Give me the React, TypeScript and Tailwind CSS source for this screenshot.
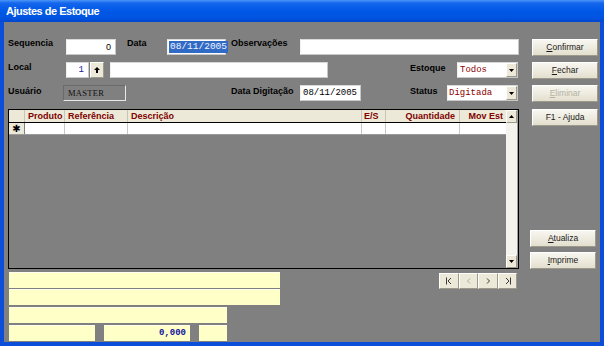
import React from "react";

const SANS = "font-['Liberation_Sans',Arial,sans-serif]";
const MONO = "font-['Liberation_Mono','Courier_New',monospace]";

function Lbl({ children, className }: { children: React.ReactNode; className: string }) {
  return (
    <span className={`shrink-0 self-start text-[9px] font-bold leading-none text-black whitespace-nowrap ${SANS} ${className}`}>
      {children}
    </span>
  );
}

function Btn({ children, className, disabled }: { children: React.ReactNode; className: string; disabled?: boolean }) {
  return (
    <div
      className={`h-[17px] w-[66px] shrink-0 flex items-center justify-center border border-t-white border-l-white border-r-[#9d9a8c] border-b-[#9d9a8c] bg-[linear-gradient(180deg,#f7f6f0_0%,#ece9dc_60%,#e2dfcf_100%)] text-[8.5px] leading-none ${SANS} ${disabled ? "text-[#b5b2a4]" : "text-[#1a1a1a]"} ${className}`}
    >
      {children}
    </div>
  );
}

function DropArrow() {
  return (
    <div className="w-[11px] h-full shrink-0 flex items-center justify-center bg-[#ece9d8] border border-t-white border-l-white border-r-[#9d9a8c] border-b-[#9d9a8c]">
      <svg width="5" height="3" viewBox="0 0 5 3">
        <path d="M0 0 L5 0 L2.5 3 Z" fill="#000" />
      </svg>
    </div>
  );
}

function NavGlyph({ kind }: { kind: "first" | "prev" | "next" | "last" }) {
  const c = kind === "prev" ? "#b0ada0" : "#3a3a3a";
  return (
    <svg width="8" height="8" viewBox="0 0 8 8" fill="none" stroke={c} strokeWidth="1">
      {kind === "first" && (
        <>
          <path d="M1.5 0.5 V7.5" />
          <path d="M6 1 L3 4 L6 7" />
        </>
      )}
      {kind === "prev" && <path d="M5 1.5 L2.5 4 L5 6.5" />}
      {kind === "next" && <path d="M3 1.5 L5.5 4 L3 6.5" />}
      {kind === "last" && (
        <>
          <path d="M2 1 L5 4 L2 7" />
          <path d="M6.5 0.5 V7.5" />
        </>
      )}
    </svg>
  );
}

const inputBox = "h-[16px] shrink-0 bg-white border border-t-[#d8d8d8] border-l-[#f0f0f0] border-r-[#c8c8c8] border-b-[#c8c8c8]";
const yellow = "h-[16px] shrink-0 bg-[#ffffc8] border-t border-t-[#fffff0]";

export default function App() {
  return (
    <div className="w-[604px] h-[346px] bg-[#0c4ed9] flex flex-col overflow-hidden">
      {/* Title bar */}
      <div className="h-[22px] shrink-0 flex items-center pl-[6px] bg-[linear-gradient(180deg,#4a95f8_0%,#1466ec_14%,#0058e6_50%,#0053e0_82%,#0046cc_100%)]">
        <span className={`text-[11px] font-bold text-white leading-none tracking-[-0.5px] ${SANS}`}>Ajustes de Estoque</span>
      </div>

      {/* Body */}
      <div className="mx-[4px] mb-[4px] h-[320px] bg-[#808080] flex">
        {/* Left column */}
        <div className="ml-[4px] w-[511px] flex flex-col pt-[17px]">
          {/* Row 1 */}
          <div className="h-[16px] flex items-start">
            <Lbl className="w-[58px]">Sequencia</Lbl>
            <div className={`${inputBox} w-[50px] flex items-center justify-end pr-[4px]`}>
              <span className={`text-[9px] leading-none text-black ${SANS}`}>0</span>
            </div>
            <Lbl className="ml-[11px] w-[40px]">Data</Lbl>
            <div className={`${inputBox} w-[59px] flex items-center pl-[1px]`}>
              <span className={`bg-[#316ac5] text-[#f0f4ff] text-[9.5px] leading-[12px] px-[1px] ${MONO}`}>08/11/2005</span>
            </div>
            <Lbl className="ml-[5px] w-[69px]">Observações</Lbl>
            <div className={`${inputBox} w-[219px]`} />
          </div>

          {/* Row 2 */}
          <div className="mt-[7px] h-[16px] flex items-start">
            <Lbl className="w-[58px] mt-[1px]">Local</Lbl>
            <div className={`${inputBox} w-[23px] flex items-center justify-end pr-[4px]`}>
              <span className={`text-[9px] leading-none text-[#2020a0] ${MONO}`}>1</span>
            </div>
            <div className="ml-[1px] w-[14px] h-[16px] shrink-0 flex items-center justify-center bg-[#ece9d8] border border-t-white border-l-white border-r-[#9d9a8c] border-b-[#9d9a8c]">
              <svg width="6" height="6" viewBox="0 0 6 6">
                <path d="M3 0 L6 3 L4 3 L4 6 L2 6 L2 3 L0 3 Z" fill="#000" />
              </svg>
            </div>
            <div className={`${inputBox} ml-[6px] w-[218px]`} />
            <Lbl className="ml-[82px] w-[47px] mt-[2px]">Estoque</Lbl>
            <div className={`${inputBox} w-[61px] flex items-center`}>
              <span className={`flex-1 pl-[2px] text-[9px] leading-none text-[#8b0000] ${MONO}`}>Todos</span>
              <DropArrow />
            </div>
          </div>

          {/* Row 3 */}
          <div className="mt-[7px] h-[16px] flex items-start">
            <Lbl className="w-[55px] mt-[2px]">Usuário</Lbl>
            <div className="h-[16px] w-[63px] shrink-0 flex items-center pl-[4px] bg-[#808080] border border-t-[#6a6a6a] border-l-[#6a6a6a] border-r-[#e8e8e8] border-b-[#e8e8e8]">
              <span className={`text-[8.5px] leading-none text-[#101010] font-['Liberation_Serif',serif] tracking-[0.3px]`}>MASTER</span>
            </div>
            <Lbl className="ml-[105px] w-[69px] mt-[2px]">Data Digitação</Lbl>
            <div className={`${inputBox} w-[61px] flex items-center pl-[2px]`}>
              <span className={`text-[9px] leading-none text-black ${MONO}`}>08/11/2005</span>
            </div>
            <Lbl className="ml-[49px] w-[37px] mt-[2px]">Status</Lbl>
            <div className={`${inputBox} w-[71px] flex items-center`}>
              <span className={`flex-1 pl-[1px] text-[9px] leading-none text-[#8b0000] ${MONO}`}>Digitada</span>
              <DropArrow />
            </div>
          </div>

          {/* Grid */}
          <div className="mt-[8px] w-[511px] h-[160px] shrink-0 border border-black flex bg-[#808080]">
            <div className="w-[497px] flex flex-col">
              <div className={`h-[13px] flex bg-[#ece9d8] border-b border-black text-[9px] font-bold leading-[12px] text-[#800000] ${SANS}`}>
                <div className="w-[16px] border-r border-r-[#c8c5b8]" />
                <div className="w-[40px] pl-[3px] border-r border-r-[#c8c5b8]">Produto</div>
                <div className="w-[63px] pl-[3px] border-r border-r-[#c8c5b8]">Referência</div>
                <div className="w-[234px] pl-[3px] border-r border-r-[#c8c5b8]">Descrição</div>
                <div className="w-[24px] pl-[2px] border-r border-r-[#c8c5b8]">E/S</div>
                <div className="w-[74px] pr-[4px] text-right border-r border-r-[#c8c5b8]">Quantidade</div>
                <div className="w-[46px] pr-[3px] text-right">Mov Est</div>
              </div>
              <div className="h-[12px] flex bg-white border-b border-b-[#9a9a9a]">
                <div className="w-[16px] bg-[#ece9d8] border-r border-r-[#808080] flex items-center justify-center">
                  <span className="text-[10px] leading-none text-black font-['DejaVu_Sans',sans-serif]">✱</span>
                </div>
                <div className="w-[40px] border-r border-r-[#c8c8c8]" />
                <div className="w-[63px] border-r border-r-[#c8c8c8]" />
                <div className="w-[234px] border-r border-r-[#c8c8c8]" />
                <div className="w-[24px] border-r border-r-[#c8c8c8]" />
                <div className="w-[74px] border-r border-r-[#c8c8c8]" />
                <div className="w-[46px]" />
              </div>
            </div>
            <div className="w-[12px] flex flex-col bg-[#f4f3ee] border-r border-r-[#a0a0a0]">
              <div className="h-[13px] shrink-0 flex items-center justify-center bg-[#ece9d8] border border-t-white border-l-white border-r-[#9d9a8c] border-b-[#9d9a8c]">
                <svg width="5" height="3" viewBox="0 0 5 3">
                  <path d="M0 3 L5 3 L2.5 0 Z" fill="#000" />
                </svg>
              </div>
              <div className="flex-1" />
              <div className="h-[13px] shrink-0 flex items-center justify-center bg-[#ece9d8] border border-t-white border-l-white border-r-[#9d9a8c] border-b-[#9d9a8c]">
                <svg width="5" height="3" viewBox="0 0 5 3">
                  <path d="M0 0 L5 0 L2.5 3 Z" fill="#000" />
                </svg>
              </div>
            </div>
          </div>

          {/* Bottom area */}
          <div className="flex mt-[3px]">
            <div className="ml-[1px] flex flex-col">
              <div className={`${yellow} w-[271px]`} />
              <div className={`${yellow} w-[271px] mt-[1px]`} />
              <div className={`${yellow} w-[218px] mt-[2px]`} />
              <div className="mt-[2px] flex">
                <div className={`${yellow} w-[86px]`} />
                <div className={`${yellow} w-[86px] ml-[9px] flex items-center justify-end pr-[4px]`}>
                  <span className={`text-[9px] font-bold leading-none text-[#1010a0] ${MONO}`}>0,000</span>
                </div>
                <div className={`${yellow} w-[28px] ml-[9px]`} />
              </div>
            </div>
            <div className="flex-1 flex justify-end items-start pr-[2px] pt-[1px]">
              {(["first", "prev", "next", "last"] as const).map((k, i) => (
                <div
                  key={k}
                  className={`h-[16px] ${i % 2 === 0 ? "w-[20px]" : "w-[19px]"} flex items-center justify-center bg-[#ece9d8] border border-t-white border-l-white border-r-[#9d9a8c] border-b-[#9d9a8c]`}
                >
                  <NavGlyph kind={k} />
                </div>
              ))}
            </div>
          </div>
        </div>

        {/* Right column */}
        <div className="ml-[11px] w-[68px] flex flex-col pt-[17px]">
          <Btn className="ml-[2px]"><span><span className="underline">C</span>onfirmar</span></Btn>
          <Btn className="ml-[2px] mt-[6px]"><span><span className="underline">F</span>echar</span></Btn>
          <Btn className="ml-[2px] mt-[6px]" disabled><span><span className="underline">E</span>liminar</span></Btn>
          <Btn className="ml-[2px] mt-[7px]"><span>F1 - Ajuda</span></Btn>
          <Btn className="mt-[104px]"><span><span className="underline">A</span>tualiza</span></Btn>
          <Btn className="mt-[5px]"><span><span className="underline">I</span>mprime</span></Btn>
        </div>
      </div>
    </div>
  );
}
